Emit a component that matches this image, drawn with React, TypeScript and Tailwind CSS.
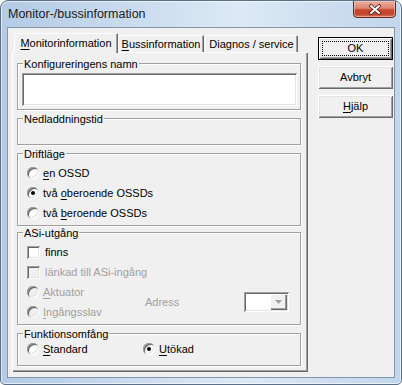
import React from 'react';

const raised =
  'shadow-[inset_1px_1px_0_#fff,inset_-1px_-1px_0_#696969,inset_2px_2px_0_#e3e3e3,inset_-2px_-2px_0_#a0a0a0]';
const sunken =
  'shadow-[inset_1px_1px_0_#a0a0a0,inset_-1px_-1px_0_#fff,inset_2px_2px_0_#696969,inset_-2px_-2px_0_#e3e3e3]';

function U({ children }: { children: React.ReactNode }) {
  return <span className="underline decoration-1 underline-offset-[2px]">{children}</span>;
}

function Radio({ checked, disabled }: { checked?: boolean; disabled?: boolean }) {
  return (
    <span className={`relative inline-block w-3 h-3 shrink-0 rounded-full ${disabled ? 'bg-[#f0f0f0]' : 'bg-white'} ${sunken}`}>
      {checked && <span className="absolute left-1 top-1 w-1 h-1 rounded-full bg-black" />}
    </span>
  );
}

function Check({ disabled }: { disabled?: boolean }) {
  return <span className={`inline-block w-[13px] h-[13px] shrink-0 ${disabled ? 'bg-[#f0f0f0]' : 'bg-white'} ${sunken}`} />;
}

function Group({ title, className, children }: { title: string; className: string; children?: React.ReactNode }) {
  return (
    <div className={`relative w-[284px] border border-[#a0a0a0] shadow-[inset_1px_1px_0_#fff,1px_1px_0_#fff] ${className}`}>
      <span className="absolute left-[5px] -top-[6px] px-[1px] bg-[#f0f0f0] leading-[13px]">{title}</span>
      {children}
    </div>
  );
}

function Row({ children, className = '' }: { children: React.ReactNode; className?: string }) {
  return <div className={`h-5 flex items-center ${className}`}>{children}</div>;
}

function Btn({ children, def }: { children: React.ReactNode; def?: boolean }) {
  if (def) {
    return (
      <div className="w-[75px] h-[23px] border border-black">
        <div className={`relative w-full h-full flex items-center justify-center ${raised}`}>
          <span className="absolute inset-[3px] border border-dotted border-black" />
          {children}
        </div>
      </div>
    );
  }
  return <div className={`w-[75px] h-[23px] flex items-center justify-center ${raised}`}>{children}</div>;
}

export default function App() {
  return (
    <div className="w-[402px] h-[385px] flex flex-col rounded-t-[8px] rounded-b-[5px] border border-[#5b6f86] overflow-hidden bg-[linear-gradient(90deg,#b3cbe5_0%,#c8daee_30%,#dde9f5_60%,#cbdcef_85%,#c2d6eb_100%)] shadow-[inset_0_0_0_1px_rgba(255,255,255,0.6)] font-['Liberation_Sans',Arial,sans-serif] text-[11px] leading-[13px] text-black">
      {/* title bar */}
      <div className="relative h-[26px] shrink-0">
        <div className="pl-[7px] pt-[6px] text-[12.5px] leading-[15px] text-[#1b1b1b]">Monitor-/bussinformation</div>
        <div className="absolute right-[5px] -top-[1px] w-[43px] h-[18px] rounded-b-[4px] border border-[#6e2a1f] bg-[linear-gradient(180deg,#eab0a2_0%,#dc8570_45%,#c9472c_55%,#c0452c_80%,#d8765c_100%)] shadow-[inset_0_0_0_1px_rgba(255,210,200,0.5)] flex items-center justify-center">
          <svg width="14" height="11" viewBox="0 0 14 11">
            <path d="M3 2 L11 9 M11 2 L3 9" stroke="#4a1c14" strokeWidth="3.6" strokeLinecap="round" />
            <path d="M3 2 L11 9 M11 2 L3 9" stroke="#fff" strokeWidth="2" strokeLinecap="round" />
          </svg>
        </div>
      </div>

      {/* client area */}
      <div className="mx-[6px] h-[351px] border border-[#8395ab] bg-[#f0f0f0] flex">
        <div className="ml-[4px] flex flex-col">
          <div className="mt-[5px] h-[19px] flex items-end">
            <div className="relative z-10 ml-[2px] w-[104px] h-[20px] -mb-[1px] bg-[#f0f0f0] rounded-t-[2px] shadow-[inset_1px_1px_0_#fff,inset_-1px_0_0_#696969,inset_-2px_0_0_#a0a0a0] flex justify-center pt-[4px]">
              <span><U>M</U>onitorinformation</span>
            </div>
            <div className="w-[86px] h-[17px] rounded-t-[2px] shadow-[inset_1px_1px_0_#fff,inset_-1px_0_0_#696969,inset_-2px_0_0_#a0a0a0] flex justify-center pt-[3px]">
              <span><U>B</U>ussinformation</span>
            </div>
            <div className="ml-[1px] w-[93px] h-[17px] rounded-t-[2px] shadow-[inset_1px_1px_0_#fff,inset_-1px_0_0_#696969,inset_-2px_0_0_#a0a0a0] flex justify-center pt-[3px]">
              <span>Diagnos / service</span>
            </div>
          </div>

          <div className="w-[296px] h-[320px] pt-[11px] pl-[5px] shadow-[inset_1px_1px_0_#fff,inset_-1px_-1px_0_#696969,inset_-2px_-2px_0_#a0a0a0]">
            <Group title="Konfigureringens namn" className="h-[47px] pt-[9px] pl-[4px]">
              <div className={`w-[275px] h-[33px] bg-white ${sunken}`} />
            </Group>

            <Group title="Nedladdningstid" className="mt-[8px] h-[27px]" />

            <Group title="Driftläge" className="mt-[8px] h-[73px] pt-[9px] pl-[9px]">
              <Row>
                <Radio />
                <span className="ml-[4px]"><U>e</U>n OSSD</span>
              </Row>
              <Row>
                <Radio checked />
                <span className="ml-[4px]">två <U>o</U>beroende OSSDs</span>
              </Row>
              <Row>
                <Radio />
                <span className="ml-[4px]">två <U>b</U>eroende OSSDs</span>
              </Row>
            </Group>

            <Group title="ASi-utgång" className="mt-[6px] h-[93px] pt-[9px] pl-[9px]">
              <Row>
                <Check />
                <span className="ml-[5px]">finns</span>
              </Row>
              <Row className="text-[#a0a0a0]">
                <Check disabled />
                <span className="ml-[5px]">länkad till ASi-ingång</span>
              </Row>
              <div className="flex items-center text-[#a0a0a0]">
                <div className="w-[118px]">
                  <Row>
                    <Radio disabled />
                    <span className="ml-[4px]"><U>A</U>ktuator</span>
                  </Row>
                  <Row>
                    <Radio disabled />
                    <span className="ml-[4px]"><U>I</U>ngångsslav</span>
                  </Row>
                </div>
                <span className="w-[99px]">Adress</span>
                <div className={`w-[45px] h-[20px] p-[2px] flex bg-white ${sunken}`}>
                  <div className="flex-1" />
                  <div className="w-[17px] h-full bg-[#f0f0f0] shadow-[inset_1px_1px_0_#fff,inset_-1px_-1px_0_#696969,inset_-2px_-2px_0_#a0a0a0] flex items-center justify-center">
                    <svg width="7" height="4" viewBox="0 0 7 4">
                      <path d="M0 0 H7 L3.5 4 Z" fill="#a0a0a0" />
                    </svg>
                  </div>
                </div>
              </div>
            </Group>

            <Group title="Funktionsomfång" className="mt-[8px] h-[33px] pt-[5px] pl-[9px]">
              <Row>
                <div className="w-[116px] flex items-center">
                  <Radio />
                  <span className="ml-[4px]"><U>S</U>tandard</span>
                </div>
                <Radio checked />
                <span className="ml-[4px]"><U>U</U>tökad</span>
              </Row>
            </Group>
          </div>
        </div>

        <div className="ml-[10px] pt-[9px] flex flex-col gap-[6px]">
          <Btn def>OK</Btn>
          <Btn>Avbryt</Btn>
          <Btn><span><U>H</U>jälp</span></Btn>
        </div>
      </div>
    </div>
  );
}
